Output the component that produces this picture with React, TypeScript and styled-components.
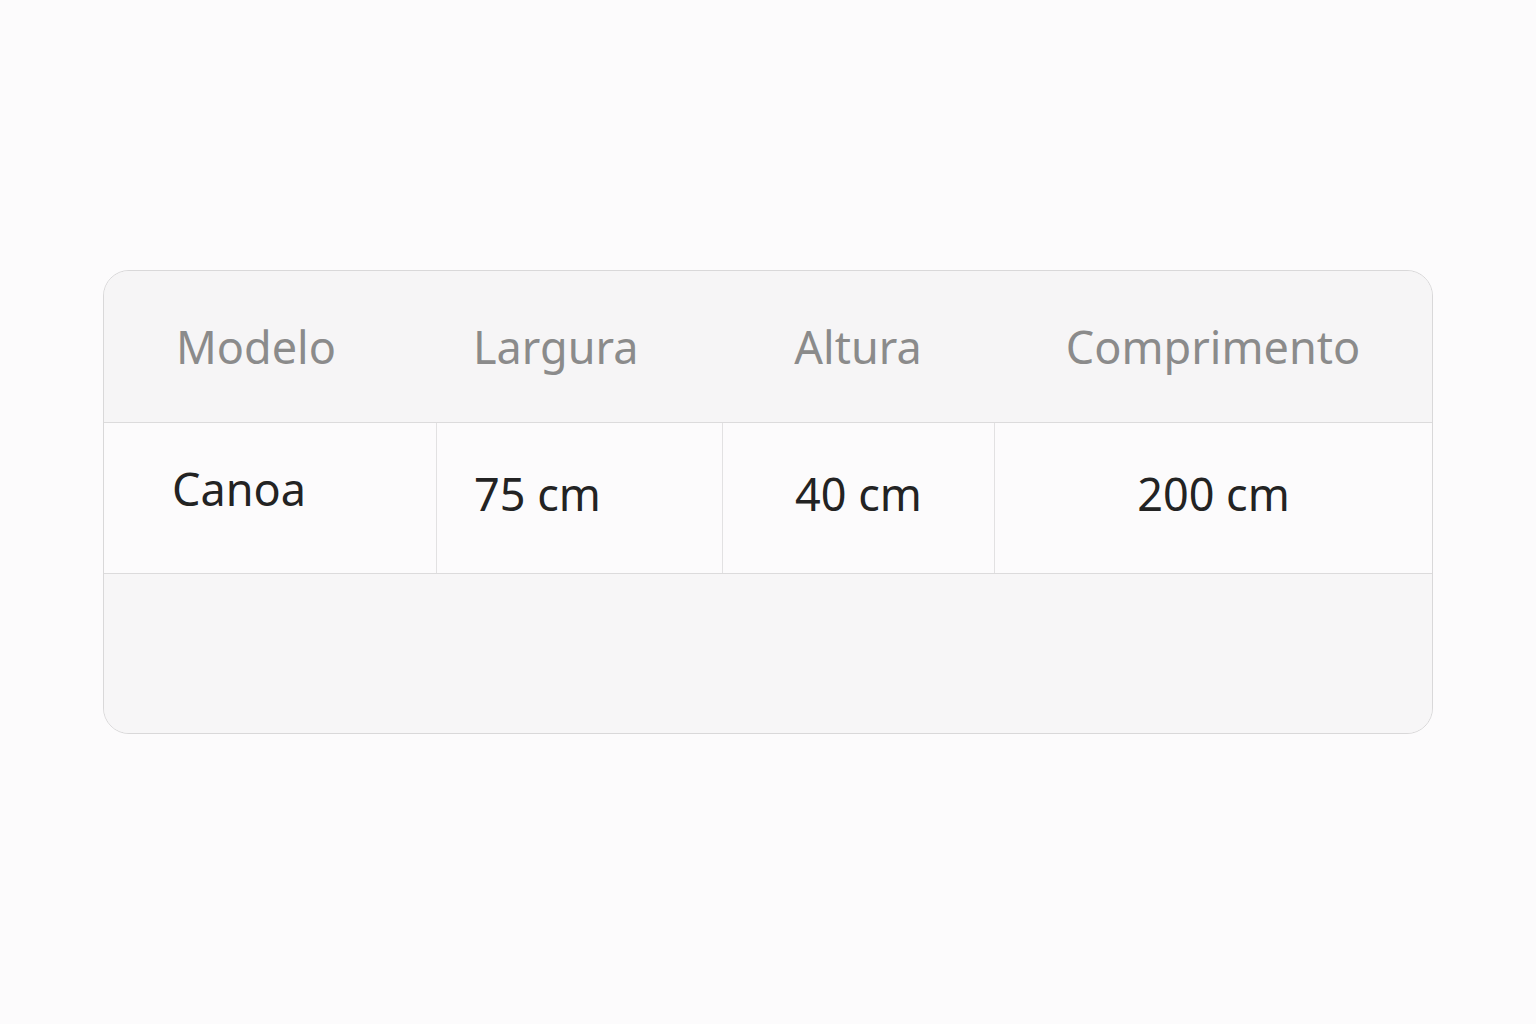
import React from 'react';
import styled, { createGlobalStyle } from 'styled-components';

const GlobalStyle = createGlobalStyle`
  body {
    margin: 0;
    background: #fcfbfc;
    font-family: 'Noto Sans', 'Open Sans', sans-serif;
  }
`;

const Page = styled.main`
  display: flex;
  justify-content: center;
  align-items: flex-start;
  padding-top: 270px;
  height: 1024px;
  box-sizing: border-box;
`;

const Card = styled.div`
  width: 1330px;
  border: 1px solid #d9d8d9;
  border-radius: 26px;
  overflow: hidden;
  background: #f7f6f7;
  box-sizing: border-box;
`;

const Row = styled.div<{ $head?: boolean }>`
  display: grid;
  grid-template-columns: 332px 286px 272px 1fr;
  height: ${(p) => (p.$head ? '151px' : '150px')};
  background: ${(p) => (p.$head ? '#f6f5f6' : '#fcfbfc')};
  border-bottom: 1px solid #dcdbdc;
`;

type Align = 'left' | 'center';

const Cell = styled.div<{ $head?: boolean; $align: Align; $pad?: number; $divider?: boolean; $shift?: number }>`
  display: flex;
  align-items: center;
  justify-content: ${(p) => (p.$align === 'center' ? 'center' : 'flex-start')};
  padding-left: ${(p) => p.$pad ?? 0}px;
  padding-bottom: ${(p) => p.$shift ?? 0}px;
  border-left: ${(p) => (p.$divider ? '1px solid #e2e1e2' : 'none')};
  font-size: 45px;
  letter-spacing: 0;
  color: ${(p) => (p.$head ? '#8b8b8b' : '#232323')};
`;

const Filler = styled.div`
  height: 159px;
  background: #f7f6f7;
`;

const columns: { head: string; value: string; align: Align; headPad?: number; pad?: number; shift: number }[] = [
  { head: 'Modelo', value: 'Canoa', align: 'left', headPad: 72, pad: 68, shift: 20 },
  { head: 'Largura', value: '75 cm', align: 'left', headPad: 37, pad: 37, shift: 10 },
  { head: 'Altura', value: '40 cm', align: 'center', shift: 10 },
  { head: 'Comprimento', value: '200 cm', align: 'center', shift: 10 },
];

export default function App() {
  return (
    <>
      <GlobalStyle />
      <Page>
        <Card>
          <Row $head>
            {columns.map((c) => (
              <Cell key={c.head} $head $align={c.align} $pad={c.headPad}>
                {c.head}
              </Cell>
            ))}
          </Row>
          <Row>
            {columns.map((c, i) => (
              <Cell key={c.value} $align={c.align} $pad={c.pad} $divider={i > 0} $shift={c.shift}>
                {c.value}
              </Cell>
            ))}
          </Row>
          <Filler />
        </Card>
      </Page>
    </>
  );
}
